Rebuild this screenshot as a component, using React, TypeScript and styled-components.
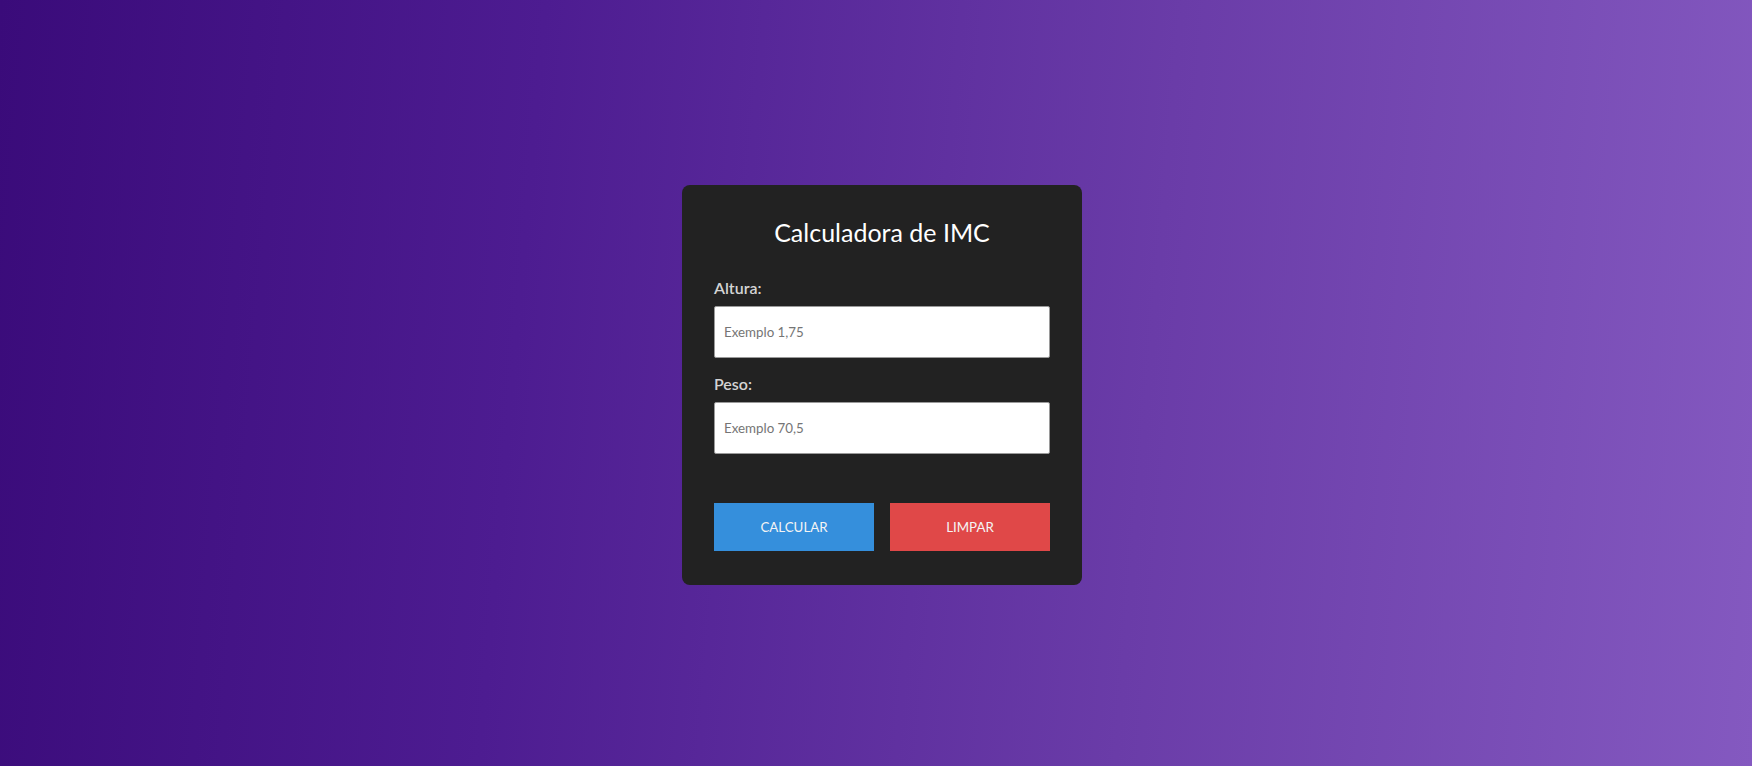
import React from "react";
import styled, { createGlobalStyle } from "styled-components";

const Global = createGlobalStyle`
  html, body { margin: 0; padding: 0; height: 100%; }
  body { font-family: Lato, "Open Sans", sans-serif; }
  * { box-sizing: border-box; }
`;

const Page = styled.main`
  width: 100vw;
  height: 100vh;
  display: flex;
  align-items: center;
  justify-content: center;
  padding: 4px 0 0 12px;
  background: linear-gradient(95deg, #3a0b7a 0%, #4d1c91 30%, #6a3ca8 65%, #8459c0 100%);
`;

const Card = styled.form`
  width: 400px;
  height: 400px;
  background: #222222;
  border-radius: 8px;
  padding: 32px 32px 30px;
  display: flex;
  flex-direction: column;
`;

const Title = styled.h1`
  margin: 0 0 31px;
  font-size: 25px;
  font-weight: 400;
  color: #ffffff;
  text-align: center;
  line-height: 1.2;
`;

const Field = styled.div<{ $last?: boolean }>`
  display: flex;
  flex-direction: column;
  gap: 9px;
  margin-bottom: ${(p) => (p.$last ? "49px" : "16px")};
`;

const Label = styled.label`
  font-size: 16px;
  font-weight: 600;
  color: #d4d4d4;
  line-height: 1.2;
`;

const Input = styled.input`
  width: 100%;
  height: 52px;
  border: 1px solid #9a9a9a;
  border-radius: 2px;
  background: #ffffff;
  padding: 0 9px;
  font-family: Lato, sans-serif;
  font-size: 13.333px;
  color: #333;
  outline: none;
  &::placeholder { color: #757575; }
`;

const Actions = styled.div`
  display: grid;
  grid-template-columns: 1fr 1fr;
  gap: 16px;
`;

const Button = styled.button<{ $color: string }>`
  height: 48px;
  border: none;
  background: ${(p) => p.$color};
  color: #f4f4f4;
  font-family: Lato, sans-serif;
  font-size: 13.333px;
  font-weight: 400;
  text-transform: uppercase;
  cursor: pointer;
`;

export default function App() {
  return (
    <>
      <Global />
      <Page>
        <Card onSubmit={(e) => e.preventDefault()}>
          <Title>Calculadora de IMC</Title>
          <Field>
            <Label htmlFor="altura">Altura:</Label>
            <Input id="altura" placeholder="Exemplo 1,75" />
          </Field>
          <Field $last>
            <Label htmlFor="peso">Peso:</Label>
            <Input id="peso" placeholder="Exemplo 70,5" />
          </Field>
          <Actions>
            <Button type="submit" $color="#358fdc">Calcular</Button>
            <Button type="reset" $color="#e04848">Limpar</Button>
          </Actions>
        </Card>
      </Page>
    </>
  );
}
